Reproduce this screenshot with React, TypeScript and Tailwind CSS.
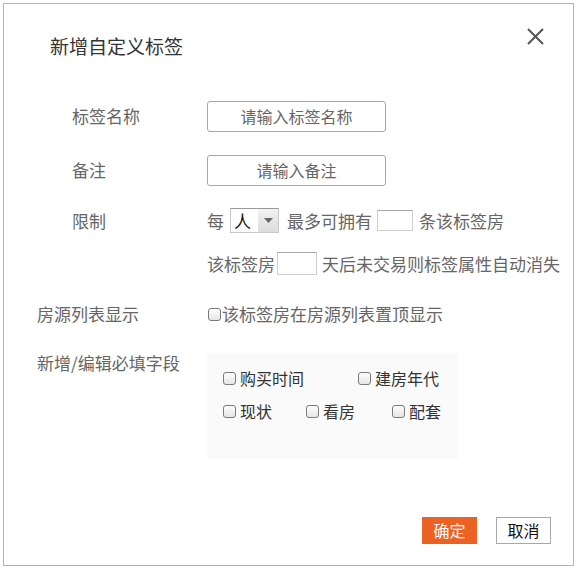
const font = { fontFamily: '"Noto Sans CJK SC", "Noto Sans", sans-serif' };

function Checkbox() {
  return (
    <span className="inline-block w-[13px] h-[13px] shrink-0 rounded-[3px] border border-[#7a7a7a] bg-gradient-to-b from-[#fdfdfd] to-[#e6e6e6]" />
  );
}

function CheckItem({ label, className = '' }: { label: string; className?: string }) {
  return (
    <label className={`flex items-center gap-[4px] text-[16px] leading-[20px] text-[#333] ${className}`}>
      <Checkbox />
      <span>{label}</span>
    </label>
  );
}

export default function App() {
  return (
    <div className="w-[578px] h-[570px] bg-white" style={font}>
      <div className="relative ml-[3px] pt-[3px]">
        <div className="relative w-[571px] h-[563px] border border-[#b4b4b4] bg-white">
          {/* close */}
          <button className="absolute left-[523px] top-[24px]">
            <svg width="17" height="17" viewBox="0 0 17 17" className="block">
              <path d="M1 1L16 16M16 1L1 16" stroke="#555" strokeWidth="2" />
            </svg>
          </button>

          {/* title */}
          <h1 className="mt-[28px] pl-[46px] text-[19px] leading-[28px] text-[#333] font-normal">新增自定义标签</h1>

          {/* 标签名称 */}
          <div className="mt-[40px] flex items-center h-[32px]">
            <div className="w-[203px] pl-[68px] text-[17px] text-[#666]">标签名称</div>
            <div className="w-[179px] h-[31px] rounded-[3px] border border-[#a8a8a8] flex items-center justify-center text-[16px] text-[#666]">
              请输入标签名称
            </div>
          </div>

          {/* 备注 */}
          <div className="mt-[22px] flex items-center h-[32px]">
            <div className="w-[203px] pl-[68px] text-[17px] text-[#666]">备注</div>
            <div className="w-[179px] h-[31px] rounded-[3px] border border-[#a8a8a8] flex items-center justify-center text-[16px] text-[#666]">
              请输入备注
            </div>
          </div>

          {/* 限制 */}
          <div className="mt-[22px] flex items-center h-[25px] text-[17px] text-[#666]">
            <div className="w-[203px] pl-[68px]">限制</div>
            <span>每</span>
            <div className="ml-[6px] flex h-[25px] w-[49px] border border-[#c8c8c8] border-t-[#9a9a9a]">
              <span className="flex-1 pl-[3px] leading-[23px] text-[#111]">人</span>
              <span className="w-[20px] bg-gradient-to-b from-[#f2f2f2] to-[#dcdcdc] flex items-center justify-center">
                <svg width="9" height="5" viewBox="0 0 9 5">
                  <path d="M0 0h9L4.5 5z" fill="#666" />
                </svg>
              </span>
            </div>
            <span className="ml-[8px]">最多可拥有</span>
            <span className="ml-[5px] w-[36px] h-[21px] border border-[#d0d0d0] border-t-[#a8a8a8] bg-white" />
            <span className="ml-[6px]">条该标签房</span>
          </div>

          <div className="mt-[19px] flex items-center h-[23px] text-[17px] text-[#666]">
            <div className="w-[203px]" />
            <span>该标签房</span>
            <span className="ml-[2px] w-[40px] h-[23px] border border-[#d0d0d0] border-t-[#a8a8a8] bg-white" />
            <span className="ml-[5px]">天后未交易则标签属性自动消失</span>
          </div>

          {/* 房源列表显示 */}
          <div className="mt-[27px] flex items-center h-[24px] text-[17px] text-[#666]">
            <div className="w-[203px] pl-[33px]">房源列表显示</div>
            <span className="ml-[1px]"><Checkbox /></span>
            <span className="ml-[1px]">该标签房在房源列表置顶显示</span>
          </div>

          {/* 必填字段 */}
          <div className="mt-[27px] flex items-start">
            <div className="w-[203px] pl-[33px] text-[17px] leading-[20px] text-[#666]">新增/编辑必填字段</div>
            <div className="w-[251px] h-[106px] bg-[#fafafa] pl-[16px] pt-[15px]">
              <div className="flex">
                <CheckItem label="购买时间" className="w-[135px]" />
                <CheckItem label="建房年代" />
              </div>
              <div className="mt-[13px] flex">
                <CheckItem label="现状" className="w-[83px]" />
                <CheckItem label="看房" className="w-[86px]" />
                <CheckItem label="配套" />
              </div>
            </div>
          </div>

          {/* footer */}
          <div className="mt-[58px] flex justify-end pr-[22px] gap-[19px]">
            <button className="w-[55px] h-[27px] bg-[#ec6124] text-white text-[16px] leading-[27px]">确定</button>
            <button className="w-[55px] h-[27px] border border-[#a8a8a8] bg-white text-[#111] text-[16px] leading-[25px]">取消</button>
          </div>
        </div>
      </div>
    </div>
  );
}
